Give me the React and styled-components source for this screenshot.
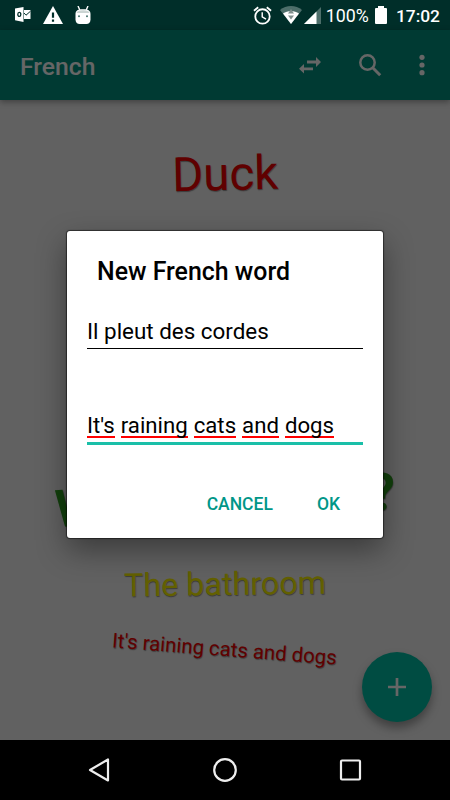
import styled, { createGlobalStyle, css } from 'styled-components'

const words = [
  { text: 'Duck', color: '#f00000', size: 47.5, height: 88, turn: -1.3, top: 30 },
  { text: 'Where are we?', color: '#2fa01f', size: 51.8, height: 60, turn: -3, top: 253, weight: 700 },
  { text: 'The bathroom', color: '#f8f000', size: 32.3, height: 50, turn: -0.8, top: 28 },
  { text: "It's raining cats and dogs", color: '#f00000', size: 20.4, height: 40, turn: 4.4, top: 20 },
]

const App = () => {
  return (
    <Screen>
      <GlobalStyle />
      <StatusBar>
        <Notifications>
          <MailIcon />
          <WarningIcon />
          <RobotIcon />
        </Notifications>
        <SystemInfo>
          <AlarmIcon />
          <WifiIcon />
          <SignalIcon />
          <Percent>100%</Percent>
          <BatteryIcon />
          <Clock>17:02</Clock>
        </SystemInfo>
      </StatusBar>
      <Page>
        <Toolbar>
          <ToolbarTitle>French</ToolbarTitle>
          <ToolbarIcons>
            <svg width='22' height='17' viewBox='0 0 22 17' fill='#fff'>
              <path d='M8 3.600h9V0l5 5-5 5V6.600H8zM14 10.400H5V7l-5 4.800 5 4.700V13.300h9z' />
            </svg>
            <svg width='24' height='24' viewBox='0 0 24 24' fill='none' stroke='#fff' strokeWidth='2.500'>
              <circle cx='9.500' cy='9.500' r='7.200' />
              <path d='M14.500 14.500l7.700 7.700' strokeWidth='3' />
            </svg>
            <svg width='6' height='22' viewBox='0 0 6 22' fill='#fff'>
              <circle cx='3' cy='3.300' r='2.600' />
              <circle cx='3' cy='11' r='2.600' />
              <circle cx='3' cy='18.700' r='2.600' />
            </svg>
          </ToolbarIcons>
        </Toolbar>
        <WordCloud>
          {words.map((word) => (
            <Word
              key={word.text}
              $color={word.color}
              $size={word.size}
              $height={word.height}
              $turn={word.turn}
              $top={word.top}
              $weight={word.weight}
            >
              {word.text}
            </Word>
          ))}
        </WordCloud>
        <Fab aria-label='Add word'>
          <svg width='20' height='20' viewBox='0 0 20 20' stroke='#fff' strokeWidth='2.700'>
            <path d='M1 10h18M10 1v18' />
          </svg>
        </Fab>
        <Scrim>
          <Dialog>
            <DialogTitle>New French word</DialogTitle>
            <Field>Il pleut des cordes</Field>
            <Field $focused>
              {"It's raining cats and dogs".split(' ').map((part) => (
                <Misspelled key={part}>{part}</Misspelled>
              ))}
            </Field>
            <Actions>
              <Action>CANCEL</Action>
              <Action>OK</Action>
            </Actions>
          </Dialog>
        </Scrim>
      </Page>
      <NavBar>
        <svg width='24' height='26' viewBox='0 0 24 26'>
          <path d='M21 2.500v21L3 13z' />
        </svg>
        <svg width='26' height='26' viewBox='0 0 26 26'>
          <circle cx='13' cy='13' r='10.800' />
        </svg>
        <svg width='24' height='24' viewBox='0 0 24 24'>
          <rect x='2' y='2.500' width='19' height='19' rx='1' />
        </svg>
      </NavBar>
    </Screen>
  )
}

export default App

const MailIcon = () => (
  <svg width='16' height='15' viewBox='0 0 16 15'>
    <path d='M0 1.500L8.500 0v15L0 13.200z' fill='#fff' />
    <path d='M9 3h6.500v9H9z' fill='#fff' />
    <path d='M9 6l2 2.200 4.500-4' fill='none' stroke='#002e29' />
    <ellipse cx='4.300' cy='7.400' rx='1.500' ry='2' fill='none' stroke='#002e29' strokeWidth='1.300' />
  </svg>
)

const WarningIcon = () => (
  <svg width='20' height='18' viewBox='0 0 20 18'>
    <path d='M10 0l10 18H0z' fill='#fff' />
    <path d='M10 6.500v5.300M10 13.500v2.200' stroke='#002e29' strokeWidth='2.200' />
  </svg>
)

const RobotIcon = () => (
  <svg width='16' height='18' viewBox='0 0 16 18'>
    <path d='M3 0l2 4.500M13 0l-2 4.500' stroke='#fff' strokeWidth='1.400' />
    <path d='M.500 8C.500 4.500 3 3.200 8 3.200S15.500 4.500 15.500 8v5.500c0 3-2 4.500-4 4.500h-7c-2 0-4-1.500-4-4.500z' fill='#fff' />
    <path d='M1.500 7C2 5 4 4.200 8 4.200S14 5 14.500 7z' fill='#cbd5d3' />
    <circle cx='4' cy='10.300' r='1' fill='#46736c' />
    <circle cx='12' cy='10.300' r='1' fill='#46736c' />
  </svg>
)

const AlarmIcon = () => (
  <svg width='19' height='19' viewBox='0 0 20 20' fill='none' stroke='#fff' strokeWidth='1.900'>
    <circle cx='10' cy='11' r='7.600' />
    <path d='M1 5L5.500 1.300M19 5L14.500 1.300' />
    <path d='M9.700 6.500v5l4 2.400' strokeWidth='1.500' />
  </svg>
)

const WifiIcon = () => (
  <svg width='22' height='18' viewBox='0 0 22 18'>
    <path d='M11 18L0 4C6-1.200 16-1.200 22 4z' fill='#4d6e6a' />
    <path d='M11 18L3 7.600C7.500 4 14.500 4 19 7.600z' fill='#fff' />
    <path d='M11 3l3 4.500H8zM11 13.500l3-4H8z' fill='#808f8d' />
  </svg>
)

const SignalIcon = () => (
  <svg width='17' height='17' viewBox='0 0 17 17'>
    <path d='M17 0v17H0z' fill='#4d6e6a' />
    <path d='M12.500 4.500V17H0z' fill='#fff' />
  </svg>
)

const BatteryIcon = () => (
  <svg width='12' height='18' viewBox='0 0 12 18' fill='#fff'>
    <path d='M3 0h6v2h2q1 0 1 1v14q0 1-1 1H1q-1 0-1-1V3q0-1 1-1h2z' />
  </svg>
)

const GlobalStyle = createGlobalStyle`
  body {
    margin: 0;
    background: #000;
    font-family: Roboto, sans-serif;
  }
  svg {
    display: block;
    flex-shrink: 0;
  }
`

const Screen = styled.div`
  width: 450px;
  height: 800px;
  display: flex;
  flex-direction: column;
  overflow: hidden;
`

const StatusBar = styled.header`
  height: 30px;
  box-sizing: border-box;
  padding: 0 10px 0 15px;
  display: flex;
  align-items: center;
  justify-content: space-between;
  background: #002e29;
  color: #fff;
`

const Notifications = styled.div`
  display: flex;
  align-items: center;
  gap: 12px;
  padding-bottom: 1px;
`

const SystemInfo = styled.div`
  display: flex;
  align-items: center;
  svg + svg {
    margin-left: 2px;
  }
  svg:first-child {
    margin-right: 6px;
  }
`

const Percent = styled.span`
  margin: 2px 6px 0 5px;
  font-size: 17.800px;
  line-height: 20px;
`

const Clock = styled.span`
  margin: 2px 0 0 9px;
  font-size: 17.400px;
  line-height: 20px;
  font-weight: 500;
`

const Page = styled.main`
  position: relative;
  height: 710px;
  display: flex;
  flex-direction: column;
  background: #f2f2f2;
`

const Toolbar = styled.div`
  height: 70px;
  flex-shrink: 0;
  box-sizing: border-box;
  padding: 0 25px 0 20px;
  display: flex;
  align-items: center;
  justify-content: space-between;
  background: #009280;
  box-shadow: 0 2px 6px rgba(0, 0, 0, 0.35);
`

const ToolbarTitle = styled.h1`
  margin: 2px 0 0;
  font-size: 24.700px;
  font-weight: 500;
  color: #fff;
`

const ToolbarIcons = styled.div`
  display: flex;
  align-items: center;
  gap: 37px;
`

const WordCloud = styled.div`
  display: flex;
  flex-direction: column;
  align-items: center;
`

const Word = styled.span`
  margin-top: ${({ $top }) => $top}px;
  height: ${({ $height }) => $height}px;
  line-height: ${({ $height }) => $height}px;
  font-size: ${({ $size }) => $size}px;
  font-weight: ${({ $weight }) => $weight || 400};
  color: ${({ $color }) => $color};
  transform: rotate(${({ $turn }) => $turn}deg);
  text-shadow: 0.500px 1px 1px rgba(0, 0, 0, 0.4);
  white-space: nowrap;
`

const Fab = styled.button`
  position: absolute;
  right: 18px;
  bottom: 18px;
  width: 70px;
  height: 70px;
  padding: 0;
  border: none;
  border-radius: 50%;
  display: flex;
  align-items: center;
  justify-content: center;
  background: #00bfa5;
  box-shadow: 0 6px 10px rgba(0, 0, 0, 0.35);
`

const Scrim = styled.div`
  position: absolute;
  inset: 0;
  box-sizing: border-box;
  padding-bottom: 1px;
  display: flex;
  align-items: center;
  justify-content: center;
  background: rgba(0, 0, 0, 0.6);
`

const Dialog = styled.section`
  width: 316px;
  height: 307px;
  box-sizing: border-box;
  padding: 25px 20px 0;
  display: flex;
  flex-direction: column;
  border-radius: 3px;
  background: #fff;
  box-shadow: 0 0 1px 1px rgba(0, 0, 0, 0.5), 0 12px 30px rgba(0, 0, 0, 0.4);
`

const DialogTitle = styled.h2`
  margin: 0 0 26px 10px;
  font-size: 24.900px;
  line-height: 32px;
  font-weight: 500;
  color: #000;
`

const Field = styled.div`
  height: 35px;
  box-sizing: border-box;
  display: flex;
  gap: 6px;
  font-size: 22.400px;
  line-height: 34px;
  border-bottom: 1px solid #000;
  ${({ $focused }) =>
    $focused &&
    css`
      margin-top: 59px;
      height: 37px;
      font-size: 22.200px;
      border-bottom: 3px solid #1abfa8;
    `}
`

const Misspelled = styled.span`
  height: 30px;
  box-sizing: border-box;
  border-bottom: 2px solid #f00;
`

const Actions = styled.div`
  display: flex;
  justify-content: flex-end;
  gap: 44px;
  padding: 48px 23px 0 0;
`

const Action = styled.button`
  padding: 0;
  border: none;
  background: none;
  font: 500 17.500px/22px Roboto, sans-serif;
  color: #009688;
`

const NavBar = styled.nav`
  height: 60px;
  display: flex;
  align-items: center;
  justify-content: center;
  gap: 101px;
  background: #000;
  svg {
    fill: none;
    stroke: #eee;
    stroke-width: 2.200;
    stroke-linejoin: round;
  }
`
